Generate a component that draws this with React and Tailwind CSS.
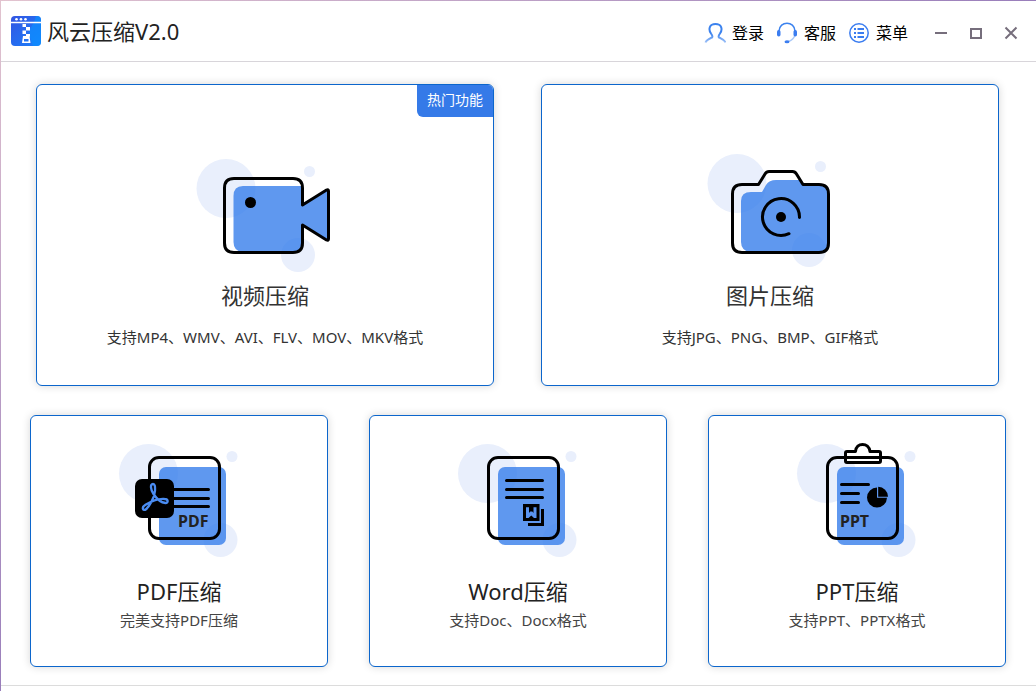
import React from "react";

function Bubbles({ x, y }) {
  return (
    <g fill="#e9effc">
      <circle cx={x} cy={y} r="29.5" />
      <circle cx={x + 83.5} cy={y - 17} r="5.5" />
      <circle cx={x + 72} cy={y + 66.5} r="17" />
    </g>
  );
}

const line = { fill: "none", stroke: "#000", strokeWidth: 3, strokeLinecap: "round", strokeLinejoin: "round" };
const tint = { fill: "#2f79ea", fillOpacity: 0.77 };

function VideoArt() {
  return (
    <svg width="140" height="129" viewBox="0 0 140 129" aria-hidden="true">
      <Bubbles x={31} y={38.5} />
      <path {...tint} d="M48 36H108V53L132 39.5L133.5 41V89L131.5 90.5L108 75V94Q108 102 100 102H48Q38.500 101.500 38.500 92V46Q38.500 36 48 36Z" />
      <path {...line} d="M107.500 55V38Q107.500 28.500 98 28.500H39Q29.500 28.500 29.500 38V93Q29.500 102.500 39 102.500H98Q107.500 102.500 107.500 93V75L131.500 90Q133.500 91 133.500 89V41Q133.500 39 131.500 40Z" />
      <circle cx="55.500" cy="52.500" r="5.500" />
    </svg>
  );
}

function CameraArt() {
  return (
    <svg width="140" height="129" viewBox="0 0 140 129" aria-hidden="true">
      <Bubbles x={37} y={33.5} />
      <path {...tint} d="M51 42H62L66 35Q69 30 76 30H99L102.500 34.500H119Q128.500 34.500 128.500 44V93Q128.500 102.500 119 102.500H51Q41 101 41 92V51Q41 42 51 42Z" />
      <path {...line} d="M42 34.500H58.500L65 24Q66.500 21.500 69 21.500H92.500Q95 21.500 96.500 24L103 34.500H119Q128.500 34.500 128.500 44V93Q128.500 102.500 119 102.500H42Q32.500 102.500 32.500 93V44Q32.500 34.500 42 34.500Z" />
      <path {...line} d="M99.500 67.500A18.500 18.500 0 1 0 89 83.700" />
      <circle cx="81" cy="67" r="5" />
    </svg>
  );
}

function Sheet({ children }) {
  return (
    <svg width="140" height="120" viewBox="0 0 140 120" aria-hidden="true">
      <Bubbles x={39.5} y={33.5} />
      <rect {...tint} x="50" y="27" width="67" height="78" rx="7" />
      <rect {...line} x="40.500" y="17.500" width="70" height="81" rx="9.500" />
      {children}
    </svg>
  );
}

function PdfArt() {
  return (
    <Sheet>
      <rect x="26" y="39" width="39" height="39" rx="7" />
      <path {...line} d="M64 49.500H99.500M64 58.500H99.500M64 66.500H99.500" />
      <path
        fill="none"
        stroke="#4a8cf2"
        strokeWidth="2.300"
        strokeLinejoin="round"
        d="M44 44C41 44 41.500 49.500 44.500 54C47.500 58.500 51.500 62.500 56.500 63C59.500 63 59.500 59 55.500 59C49 58.500 41 62 36.500 64.800C32 67.500 34 71.500 37 69.300C40.500 66 45.500 57.500 46 51C46.200 46.500 46 44 44 44Z"
      />
      <text x="69" y="87" className="fill-[#222] text-base font-bold">PDF</text>
    </Sheet>
  );
}

function WordArt() {
  return (
    <Sheet>
      <path {...line} d="M58.500 40.500H94.500M58.500 49.500H94.500M58.500 57.500H94.500" />
      <path d="M75 64H91.500V81H75Z" />
      <path fill="none" stroke="#000" strokeWidth="3" d="M94.500 69V84.500H80" />
      <path fill="#5a94f0" d="M78 67.300H81V73L82.200 71.500H84.300L85.500 73V67.300H88.500V78H86L83.300 75.500L80.500 78H78Z" />
    </Sheet>
  );
}

function PptArt() {
  return (
    <Sheet>
      <path fill="#fff" stroke="#000" strokeWidth="3" strokeLinejoin="round" d="M60 11.500H68.500C69 2 82 2 83 11.500H92Q93.500 11.500 93.500 13V21Q93.500 22.500 92 22.500H60Q58.500 22.500 58.500 21V13Q58.500 11.500 60 11.500Z" />
      <path {...line} d="M60 17.500H92" />
      <path {...line} d="M54.500 44.500H81.500M54.500 53.500H71.500M54.500 62.500H71.500" />
      <path d="M90 47.500V57.800H100A10 10 0 1 1 90 47.500Z" />
      <path d="M91.200 46.800A10 10 0 0 1 101 56.700H91.200Z" />
      <text x="53" y="87" className="fill-[#222] text-base font-bold">PPT</text>
    </Sheet>
  );
}

function Logo() {
  return (
    <svg width="30" height="30" viewBox="0 0 30 30" aria-hidden="true">
      <defs>
        <linearGradient id="logo" x1="0" y1="0" x2="1" y2="1">
          <stop offset="0" stopColor="#3355e2" />
          <stop offset="1" stopColor="#1a80fb" />
        </linearGradient>
      </defs>
      <rect width="30" height="30" rx="4" fill="url(#logo)" />
      <path d="M25 0H26Q30 0 30 4V26Q30 30 26 30H22L18.500 20V14L23 6Z" fill="#0a90ff" opacity=".65" />
      <path d="M0 6.500H30" stroke="#fff" strokeWidth="1.500" />
      <g fill="#fff">
        <circle cx="5.500" cy="3.200" r="1.300" />
        <circle cx="10" cy="3.200" r="1.300" />
        <circle cx="14.500" cy="3.200" r="1.300" />
        <path d="M11.500 8H15V11H11.500ZM15 11H19V14.500H15ZM11.500 14.500H15V18H11.500ZM15 18H19V20.500H15Z" />
        <path fillRule="evenodd" d="M12 20H18.500L19.500 27H11ZM13 23V25.500H17.500V23Z" />
      </g>
    </svg>
  );
}

function UserIcon() {
  return (
    <svg width="22" height="22" viewBox="0 0 22 22" fill="none" strokeWidth="2" aria-hidden="true">
      <defs>
        <linearGradient id="user" x1="0" y1="0" x2="0" y2="1">
          <stop offset="0.5" stopColor="#3b82ee" />
          <stop offset="1" stopColor="#9cc0f7" />
        </linearGradient>
      </defs>
      <path stroke="url(#user)" d="M1.500 20.500C2.500 18 5 17 8 15.500C9 14.500 8.500 13.500 7 11.500C4 7 5.500 2 11.500 2S19 7 16 11.500C14.500 13.500 14 14.500 15 15.500C18 17 20.500 18 21.500 20.500" />
    </svg>
  );
}

function HeadsetIcon() {
  return (
    <svg width="22" height="22" viewBox="0 0 22 22" fill="none" aria-hidden="true">
      <path d="M3 9C3.500 -1.500 18.500 -1.500 19 9" stroke="#3b82ee" strokeWidth="1.500" />
      <path d="M19 13Q17.500 18 12 19.500" stroke="#a9c8f8" strokeWidth="1.300" />
      <rect x="1" y="8" width="3.500" height="6.500" rx="1.700" fill="#3b7df0" />
      <rect x="17.500" y="8" width="3.500" height="6.500" rx="1.700" fill="#3b7df0" />
      <ellipse cx="11" cy="19.700" rx="2.500" ry="1.500" fill="#3b7df0" />
    </svg>
  );
}

function MenuIcon() {
  return (
    <svg width="22" height="22" viewBox="0 0 22 22" fill="none" stroke="#3b7df0" aria-hidden="true">
      <circle cx="11" cy="11" r="9.200" strokeWidth="1.500" />
      <path strokeWidth="2" d="M6 7H8M9.500 7H16M6 11H8M9.500 11H16M6 15H8M9.500 15H16" />
    </svg>
  );
}

function NavButton({ icon, label }) {
  return (
    <button type="button" className="flex items-center gap-1.5 text-base leading-6 text-black">
      {icon}
      {label}
    </button>
  );
}

function WindowButton({ label, d }) {
  return (
    <button type="button" aria-label={label}>
      <svg width="14" height="14" viewBox="0 0 14 14" fill="none" stroke="#766e7c" strokeWidth="2" aria-hidden="true">
        <path d={d} />
      </svg>
    </button>
  );
}

const cardBase =
  "relative flex min-w-0 flex-1 flex-col items-center rounded-md border border-[#0c66cc] bg-white text-center shadow-[0_0_8px_rgba(0,0,0,0.16)]";

function LargeCard({ art, title, text, badge }) {
  return (
    <button type="button" className={`${cardBase} px-4 pt-[65px] pb-9`}>
      {badge && (
        <span className="absolute top-0 right-0 rounded-tr-[5px] rounded-bl-md bg-[#357ae8] px-2.5 pt-[3px] pb-[5px] text-sm leading-6 text-white">
          {badge}
        </span>
      )}
      {art}
      <span className="text-[22px] leading-8 text-[#333]">{title}</span>
      <span className="mt-3.5 text-[15px] leading-6 text-[#333]">{text}</span>
    </button>
  );
}

function SmallCard({ art, title, text }) {
  return (
    <button type="button" className={`${cardBase} px-4 pt-6 pb-[34px]`}>
      {art}
      <span className="mt-[15px] mb-px text-[22px] leading-8 text-[#222]">{title}</span>
      <span className="text-[15px] leading-6 text-[#444]">{text}</span>
    </button>
  );
}

export default function App() {
  return (
    <div className="flex min-h-screen flex-col bg-linear-to-br from-[#e2c3cf] to-[#5a35a0] pt-px pl-px font-['Noto_Sans','Noto_Sans_CJK_SC',sans-serif]">
      <div className="flex flex-1 flex-col bg-white">
        <header className="flex h-[61px] items-center justify-between border-b border-[#d8d5da] pr-[18px] pl-2.5">
          <div className="flex items-center gap-1.5">
            <Logo />
            <h1 className="text-[22px] leading-8 text-[#222]">风云压缩V2.0</h1>
          </div>
          <div className="flex items-center gap-[26px] pt-1">
            <nav className="flex items-center gap-3">
              <NavButton icon={<UserIcon />} label="登录" />
              <NavButton icon={<HeadsetIcon />} label="客服" />
              <NavButton icon={<MenuIcon />} label="菜单" />
            </nav>
            <div className="flex items-center gap-[21px]">
              <WindowButton label="最小化" d="M1 7H13" />
              <WindowButton label="最大化" d="M2 3H12V12H2Z" />
              <WindowButton label="关闭" d="M1.500 1.500L12.500 12.500M12.500 1.500L1.500 12.500" />
            </div>
          </div>
        </header>
        <main className="flex flex-col gap-[29px] pt-[22px] pb-[18px]">
          <section className="flex gap-[47px] pr-[37px] pl-[35px]">
            <LargeCard art={<VideoArt />} title="视频压缩" text="支持MP4、WMV、AVI、FLV、MOV、MKV格式" badge="热门功能" />
            <LargeCard art={<CameraArt />} title="图片压缩" text="支持JPG、PNG、BMP、GIF格式" />
          </section>
          <section className="flex gap-[41px] pr-[30px] pl-[29px]">
            <SmallCard art={<PdfArt />} title="PDF压缩" text="完美支持PDF压缩" />
            <SmallCard art={<WordArt />} title="Word压缩" text="支持Doc、Docx格式" />
            <SmallCard art={<PptArt />} title="PPT压缩" text="支持PPT、PPTX格式" />
          </section>
        </main>
        <footer className="h-1.5 border-t border-[#dcdcdc]" />
      </div>
    </div>
  );
}
